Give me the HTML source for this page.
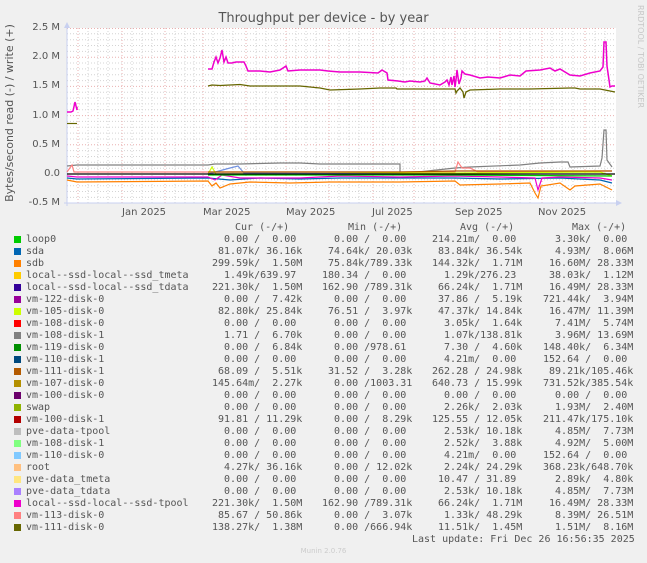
<!DOCTYPE html>
<html><head><meta charset="utf-8"><style>
body{margin:0;width:647px;height:563px;background:#f0f0f0;position:relative;overflow:hidden;font-family:"DejaVu Sans","Liberation Sans",sans-serif}
.m{position:absolute;font-family:"DejaVu Sans Mono","Liberation Mono",monospace;font-size:10px;line-height:12px;white-space:pre;color:#555}
.sq{position:absolute;left:14px;width:7px;height:7px}
.yl{position:absolute;right:587px;font-size:10px;color:#555;line-height:12px}
.xl{position:absolute;top:207px;font-size:10px;color:#555;line-height:12px}
</style></head><body>
<div style="position:absolute;left:0;width:647px;top:11px;text-align:center;font-size:13px;color:#555">Throughput per device - by year</div>
<div style="position:absolute;left:637px;top:5px;transform-origin:0 0;transform:rotate(90deg) translateY(-8px);font-size:8px;color:#c8c8c8;white-space:nowrap">RRDTOOL / TOBI OETIKER</div>
<div style="position:absolute;left:3px;top:208px;transform-origin:0 0;transform:rotate(-90deg);width:190px;text-align:center;font-size:11px;color:#555;white-space:nowrap">Bytes/second read (-) / write (+)</div>
<div class="yl" style="top:22px">2.5 M</div>
<div class="yl" style="top:51px">2.0 M</div>
<div class="yl" style="top:80px">1.5 M</div>
<div class="yl" style="top:110px">1.0 M</div>
<div class="yl" style="top:139px">0.5 M</div>
<div class="yl" style="top:168px">0.0</div>
<div class="yl" style="top:197px">-0.5 M</div>
<div class="xl" style="left:122px">Jan 2025</div>
<div class="xl" style="left:203px">Mar 2025</div>
<div class="xl" style="left:286px">May 2025</div>
<div class="xl" style="left:372px">Jul 2025</div>
<div class="xl" style="left:455px">Sep 2025</div>
<div class="xl" style="left:538px">Nov 2025</div>
<svg style="position:absolute;left:0;top:0" width="647" height="215">
<rect x="67" y="28" width="549" height="175" fill="#fff"/>
<g stroke="#d4d4d4" stroke-width="1" stroke-dasharray="1,2">
<path d="M67 33.8H615M67 39.7H615M67 45.5H615M67 51.4H615M67 63H615M67 68.9H615M67 74.7H615M67 80.6H615M67 92.2H615M67 98.1H615M67 103.9H615M67 109.8H615M67 121.4H615M67 127.3H615M67 133.1H615M67 139H615M67 150.6H615M67 156.5H615M67 162.3H615M67 168.2H615M67 179.8H615M67 185.7H615M67 191.5H615M67 197.4H615"/>
<path d="M88 28V203M98 28V203M108 28V203M132 28V203M142 28V203M152 28V203M175 28V203M185 28V203M194 28V203M213 28V203M223 28V203M233 28V203M256 28V203M266 28V203M276 28V203M296 28V203M306 28V203M316 28V203M339 28V203M349 28V203M359 28V203M383 28V203M393 28V203M403 28V203M424 28V203M434 28V203M444 28V203M465 28V203M475 28V203M487 28V203M510 28V203M520 28V203M530 28V203M552 28V203M562 28V203M573 28V203M595 28V203M605 28V203"/>
</g>
<g stroke="#eab0b0" stroke-width="1" stroke-dasharray="1,2">
<path d="M67 28.5H615M67 57.2H615M67 86.4H615M67 115.6H615M67 144.8H615M67 203H615"/>
<path d="M78 28V203M122 28V203M165 28V203M203 28V203M246 28V203M286 28V203M329 28V203M373 28V203M414 28V203M455 28V203M500 28V203M542 28V203M585 28V203"/>
</g>
<path d="M67 24V206M64 203H620" stroke="#c8d0f0" stroke-width="1"/>
<path d="M64 28L67 22L70 28Z M616 200L622 203L616 206Z" fill="#c8d0f0"/>
<g fill="none" stroke-width="1.2">
<polyline stroke="#808080" points="67,166 77,165 208,165 215,164 240,164 280,163 300,163 320,164 400,164 400,174 455,168 470,167 520,165 540,163 560,162 568,162 570,167 600,166 602,158 604,130 606,130 607,160 612,167"/>
<polyline stroke="#ff8080" points="67,172 72,165 74,172 455,172 458,162 462,168 470,168 478,172 600,171 612,171"/>
<polyline stroke="#ff8000" points="67,180 77,182 208,181 212,186 216,183 220,188 230,184 250,182 290,183 330,182 390,182 400,182 455,181 460,185 500,184 530,183 535,193 538,198 541,186 560,183 570,190 575,186 600,184 612,190"/>
<polyline stroke="#0066b3" points="67,178 77,179 208,178 230,180 260,178 300,179 340,178 400,178 455,178 500,179 560,178 600,180 612,183"/>
<polyline stroke="#ee00cc" points="67,176 77,177 208,177 215,180 222,175 240,178 300,178 340,176 400,177 455,176 500,177 535,178 538,190 542,178 560,177 600,178 612,180"/>
<polyline stroke="#ccff00" points="208,174 212,167 216,174 400,173 455,173 600,172 612,176"/>
<polyline stroke="#7090e0" points="208,174 230,168 238,166 244,173 400,174"/>
<polyline stroke="#b35a00" points="208,172 400,172 455,171 612,171"/>
<polyline stroke="#00cc00" points="208,175 400,175 455,175 612,176"/>
<polyline stroke="#ee00cc" stroke-width="1.5" points="67,112 71,112 73,111 75,102 77,110 77,107"/>
<polyline stroke="#666600" points="67,123.5 77,123.5"/>
<polyline stroke="#ee00cc" stroke-width="1.5" points="208,69 212,69 214,62 216,57 218,63 220,58 222,50 224,62 226,57 228,63 232,63 236,62 244,62 246,66 248,71 260,71 270,72 280,70 286,66 288,71 300,70 320,70 328,71 340,72 360,72 378,73 382,70 387,73 388,80 398,81 405,82 410,81 420,82 425,81 427,78 430,83 440,85 445,82 447,80 449,85 451,77 452,85 454,76 455,87 456,80 457,70 459,84 461,78 462,71 465,74 470,75 480,78 488,77 500,78 510,75 520,76 526,71 540,70 550,68 555,71 560,69 570,75 580,76 590,73 600,71 603,67 604,42 606,42 607,66 609,80 610,87 612,86 615,86"/>
<polyline stroke="#666600" stroke-width="1.3" points="208,86 212,85 220,85.5 240,84.5 250,86 270,86 300,86 320,88 330,90 360,89 380,88 395,88 396,88 397,89 455,89 456,93 457,91 460,88 463,92 464,98 466,92 470,90 500,89 530,89 570,88 575,88 580,89 600,89 610,91 615,92"/>
</g>
<path d="M67 174H615" stroke="#000" stroke-width="1.2"/>
</svg>
<div class="m" style="left:235px;top:222px">Cur (-/+)</div>
<div class="m" style="left:348px;top:222px">Min (-/+)</div>
<div class="m" style="left:460px;top:222px">Avg (-/+)</div>
<div class="m" style="left:572px;top:222px">Max (-/+)</div>

<div class="sq" style="top:236px;background:#00cc00"></div><div class="m" style="left:26px;top:234px">loop0</div><div class="m" style="left:212px;top:234px">  0.00 /  0.00 </div><div class="m" style="left:322px;top:234px">  0.00 /  0.00 </div><div class="m" style="left:432px;top:234px">214.21m/  0.00 </div><div class="m" style="left:543px;top:234px">  3.30k/  0.00 </div>
<div class="sq" style="top:248px;background:#0066b3"></div><div class="m" style="left:26px;top:246px">sda</div><div class="m" style="left:212px;top:246px"> 81.07k/ 36.16k</div><div class="m" style="left:322px;top:246px"> 74.64k/ 20.03k</div><div class="m" style="left:432px;top:246px"> 83.84k/ 36.54k</div><div class="m" style="left:543px;top:246px">  4.93M/  8.06M</div>
<div class="sq" style="top:260px;background:#ff8000"></div><div class="m" style="left:26px;top:258px">sdb</div><div class="m" style="left:212px;top:258px">299.59k/  1.50M</div><div class="m" style="left:322px;top:258px"> 75.84k/789.33k</div><div class="m" style="left:432px;top:258px">144.32k/  1.71M</div><div class="m" style="left:543px;top:258px"> 16.60M/ 28.33M</div>
<div class="sq" style="top:272px;background:#ffcc00"></div><div class="m" style="left:26px;top:270px">local--ssd-local--ssd_tmeta</div><div class="m" style="left:212px;top:270px">  1.49k/639.97 </div><div class="m" style="left:322px;top:270px">180.34 /  0.00 </div><div class="m" style="left:432px;top:270px">  1.29k/276.23 </div><div class="m" style="left:543px;top:270px"> 38.03k/  1.12M</div>
<div class="sq" style="top:284px;background:#330099"></div><div class="m" style="left:26px;top:282px">local--ssd-local--ssd_tdata</div><div class="m" style="left:212px;top:282px">221.30k/  1.50M</div><div class="m" style="left:322px;top:282px">162.90 /789.31k</div><div class="m" style="left:432px;top:282px"> 66.24k/  1.71M</div><div class="m" style="left:543px;top:282px"> 16.49M/ 28.33M</div>
<div class="sq" style="top:296px;background:#990099"></div><div class="m" style="left:26px;top:294px">vm-122-disk-0</div><div class="m" style="left:212px;top:294px">  0.00 /  7.42k</div><div class="m" style="left:322px;top:294px">  0.00 /  0.00 </div><div class="m" style="left:432px;top:294px"> 37.86 /  5.19k</div><div class="m" style="left:543px;top:294px">721.44k/  3.94M</div>
<div class="sq" style="top:308px;background:#ccff00"></div><div class="m" style="left:26px;top:306px">vm-105-disk-0</div><div class="m" style="left:212px;top:306px"> 82.80k/ 25.84k</div><div class="m" style="left:322px;top:306px"> 76.51 /  3.97k</div><div class="m" style="left:432px;top:306px"> 47.37k/ 14.84k</div><div class="m" style="left:543px;top:306px"> 16.47M/ 11.39M</div>
<div class="sq" style="top:320px;background:#ff0000"></div><div class="m" style="left:26px;top:318px">vm-108-disk-0</div><div class="m" style="left:212px;top:318px">  0.00 /  0.00 </div><div class="m" style="left:322px;top:318px">  0.00 /  0.00 </div><div class="m" style="left:432px;top:318px">  3.05k/  1.64k</div><div class="m" style="left:543px;top:318px">  7.41M/  5.74M</div>
<div class="sq" style="top:332px;background:#808080"></div><div class="m" style="left:26px;top:330px">vm-108-disk-1</div><div class="m" style="left:212px;top:330px">  1.71 /  6.70k</div><div class="m" style="left:322px;top:330px">  0.00 /  0.00 </div><div class="m" style="left:432px;top:330px">  1.07k/138.81k</div><div class="m" style="left:543px;top:330px">  3.96M/ 13.69M</div>
<div class="sq" style="top:344px;background:#008f00"></div><div class="m" style="left:26px;top:342px">vm-119-disk-0</div><div class="m" style="left:212px;top:342px">  0.00 /  6.84k</div><div class="m" style="left:322px;top:342px">  0.00 /978.61 </div><div class="m" style="left:432px;top:342px">  7.30 /  4.60k</div><div class="m" style="left:543px;top:342px">148.40k/  6.34M</div>
<div class="sq" style="top:356px;background:#00487d"></div><div class="m" style="left:26px;top:354px">vm-110-disk-1</div><div class="m" style="left:212px;top:354px">  0.00 /  0.00 </div><div class="m" style="left:322px;top:354px">  0.00 /  0.00 </div><div class="m" style="left:432px;top:354px">  4.21m/  0.00 </div><div class="m" style="left:543px;top:354px">152.64 /  0.00 </div>
<div class="sq" style="top:368px;background:#b35a00"></div><div class="m" style="left:26px;top:366px">vm-111-disk-1</div><div class="m" style="left:212px;top:366px"> 68.09 /  5.51k</div><div class="m" style="left:322px;top:366px"> 31.52 /  3.28k</div><div class="m" style="left:432px;top:366px">262.28 / 24.98k</div><div class="m" style="left:543px;top:366px"> 89.21k/105.46k</div>
<div class="sq" style="top:380px;background:#b38f00"></div><div class="m" style="left:26px;top:378px">vm-107-disk-0</div><div class="m" style="left:212px;top:378px">145.64m/  2.27k</div><div class="m" style="left:322px;top:378px">  0.00 /1003.31 </div><div class="m" style="left:432px;top:378px">640.73 / 15.99k</div><div class="m" style="left:543px;top:378px">731.52k/385.54k</div>
<div class="sq" style="top:392px;background:#6b006b"></div><div class="m" style="left:26px;top:390px">vm-100-disk-0</div><div class="m" style="left:212px;top:390px">  0.00 /  0.00 </div><div class="m" style="left:322px;top:390px">  0.00 /  0.00 </div><div class="m" style="left:432px;top:390px">  0.00 /  0.00 </div><div class="m" style="left:543px;top:390px">  0.00 /  0.00 </div>
<div class="sq" style="top:404px;background:#8fb300"></div><div class="m" style="left:26px;top:402px">swap</div><div class="m" style="left:212px;top:402px">  0.00 /  0.00 </div><div class="m" style="left:322px;top:402px">  0.00 /  0.00 </div><div class="m" style="left:432px;top:402px">  2.26k/  2.03k</div><div class="m" style="left:543px;top:402px">  1.93M/  2.40M</div>
<div class="sq" style="top:416px;background:#b30000"></div><div class="m" style="left:26px;top:414px">vm-100-disk-1</div><div class="m" style="left:212px;top:414px"> 91.81 / 11.29k</div><div class="m" style="left:322px;top:414px">  0.00 /  8.29k</div><div class="m" style="left:432px;top:414px">125.55 / 12.05k</div><div class="m" style="left:543px;top:414px">211.47k/175.10k</div>
<div class="sq" style="top:428px;background:#bebebe"></div><div class="m" style="left:26px;top:426px">pve-data-tpool</div><div class="m" style="left:212px;top:426px">  0.00 /  0.00 </div><div class="m" style="left:322px;top:426px">  0.00 /  0.00 </div><div class="m" style="left:432px;top:426px">  2.53k/ 10.18k</div><div class="m" style="left:543px;top:426px">  4.85M/  7.73M</div>
<div class="sq" style="top:440px;background:#80ff80"></div><div class="m" style="left:26px;top:438px">vm-108-disk-1</div><div class="m" style="left:212px;top:438px">  0.00 /  0.00 </div><div class="m" style="left:322px;top:438px">  0.00 /  0.00 </div><div class="m" style="left:432px;top:438px">  2.52k/  3.88k</div><div class="m" style="left:543px;top:438px">  4.92M/  5.00M</div>
<div class="sq" style="top:452px;background:#80c9ff"></div><div class="m" style="left:26px;top:450px">vm-110-disk-0</div><div class="m" style="left:212px;top:450px">  0.00 /  0.00 </div><div class="m" style="left:322px;top:450px">  0.00 /  0.00 </div><div class="m" style="left:432px;top:450px">  4.21m/  0.00 </div><div class="m" style="left:543px;top:450px">152.64 /  0.00 </div>
<div class="sq" style="top:464px;background:#ffc080"></div><div class="m" style="left:26px;top:462px">root</div><div class="m" style="left:212px;top:462px">  4.27k/ 36.16k</div><div class="m" style="left:322px;top:462px">  0.00 / 12.02k</div><div class="m" style="left:432px;top:462px">  2.24k/ 24.29k</div><div class="m" style="left:543px;top:462px">368.23k/648.70k</div>
<div class="sq" style="top:476px;background:#ffe680"></div><div class="m" style="left:26px;top:474px">pve-data_tmeta</div><div class="m" style="left:212px;top:474px">  0.00 /  0.00 </div><div class="m" style="left:322px;top:474px">  0.00 /  0.00 </div><div class="m" style="left:432px;top:474px"> 10.47 / 31.89 </div><div class="m" style="left:543px;top:474px">  2.89k/  4.80k</div>
<div class="sq" style="top:488px;background:#aa80ff"></div><div class="m" style="left:26px;top:486px">pve-data_tdata</div><div class="m" style="left:212px;top:486px">  0.00 /  0.00 </div><div class="m" style="left:322px;top:486px">  0.00 /  0.00 </div><div class="m" style="left:432px;top:486px">  2.53k/ 10.18k</div><div class="m" style="left:543px;top:486px">  4.85M/  7.73M</div>
<div class="sq" style="top:500px;background:#ee00cc"></div><div class="m" style="left:26px;top:498px">local--ssd-local--ssd-tpool</div><div class="m" style="left:212px;top:498px">221.30k/  1.50M</div><div class="m" style="left:322px;top:498px">162.90 /789.31k</div><div class="m" style="left:432px;top:498px"> 66.24k/  1.71M</div><div class="m" style="left:543px;top:498px"> 16.49M/ 28.33M</div>
<div class="sq" style="top:512px;background:#ff8080"></div><div class="m" style="left:26px;top:510px">vm-113-disk-0</div><div class="m" style="left:212px;top:510px"> 85.67 / 50.86k</div><div class="m" style="left:322px;top:510px">  0.00 /  3.07k</div><div class="m" style="left:432px;top:510px">  1.33k/ 48.29k</div><div class="m" style="left:543px;top:510px">  8.39M/ 26.51M</div>
<div class="sq" style="top:524px;background:#666600"></div><div class="m" style="left:26px;top:522px">vm-111-disk-0</div><div class="m" style="left:212px;top:522px">138.27k/  1.38M</div><div class="m" style="left:322px;top:522px">  0.00 /666.94k</div><div class="m" style="left:432px;top:522px"> 11.51k/  1.45M</div><div class="m" style="left:543px;top:522px">  1.51M/  8.16M</div>
<div class="m" style="left:412px;top:534px">Last update: Fri Dec 26 16:56:35 2025</div>
<div style="position:absolute;left:0;width:647px;top:547px;text-align:center;font-size:7px;color:#ccc">Munin 2.0.76</div>
</body></html>
